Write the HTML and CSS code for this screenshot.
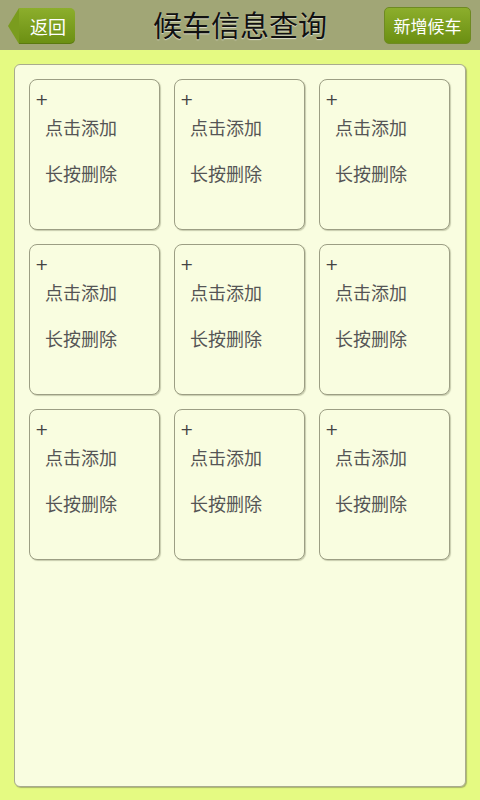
FILE: index.html
```html
<!DOCTYPE html>
<html lang="zh">
<head>
<meta charset="utf-8">
<title>候车信息查询</title>
<link rel="stylesheet" href="styles.css">
</head>
<body>
<header class="topbar">
  <a class="back-btn"><span class="back-arrow"></span><span class="back-body">返回</span></a>
  <h1 class="title">候车信息查询</h1>
  <a class="add-btn">新增候车</a>
</header>
<main class="content">
  <div class="panel">
    <div class="grid">
      <div class="card"><span class="plus">+</span><span class="line">点击添加</span><span class="line">长按删除</span></div>
      <div class="card"><span class="plus">+</span><span class="line">点击添加</span><span class="line">长按删除</span></div>
      <div class="card"><span class="plus">+</span><span class="line">点击添加</span><span class="line">长按删除</span></div>
      <div class="card"><span class="plus">+</span><span class="line">点击添加</span><span class="line">长按删除</span></div>
      <div class="card"><span class="plus">+</span><span class="line">点击添加</span><span class="line">长按删除</span></div>
      <div class="card"><span class="plus">+</span><span class="line">点击添加</span><span class="line">长按删除</span></div>
      <div class="card"><span class="plus">+</span><span class="line">点击添加</span><span class="line">长按删除</span></div>
      <div class="card"><span class="plus">+</span><span class="line">点击添加</span><span class="line">长按删除</span></div>
      <div class="card"><span class="plus">+</span><span class="line">点击添加</span><span class="line">长按删除</span></div>
    </div>
  </div>
</main>
</body>
</html>
```
FILE: styles.css
```css
* { box-sizing: border-box; }
html, body { margin: 0; padding: 0; }
body {
  width: 480px;
  height: 800px;
  background: #e5fa82;
  font-family: "Noto Sans CJK SC", "Noto Sans", sans-serif;
  overflow: hidden;
}
.topbar {
  height: 50px;
  background: #a1a676;
  display: flex;
  align-items: center;
  justify-content: space-between;
  padding: 0 9px 0 8px;
  position: relative;
}
.title {
  margin: 0;
  font-size: 29px;
  font-weight: normal;
  color: #111;
  text-shadow: 0 1px 1px rgba(255,255,255,0.6);
  position: absolute;
  left: 0;
  right: 0;
  text-align: center;
  line-height: 50px;
  top: -1px;
  pointer-events: none;
}
.back-btn {
  display: flex;
  align-items: center;
  height: 36px;
  margin-top: 2px;
  position: relative;
  z-index: 1;
}
.back-arrow {
  width: 0;
  height: 0;
  border-top: 18px solid transparent;
  border-bottom: 18px solid transparent;
  border-right: 11px solid #7a9c1e;
}
.back-body {
  height: 36px;
  width: 56px;
  background: linear-gradient(#8cae2c, #6b8f12);
  border-radius: 0 5px 5px 0;
  color: #fff;
  font-size: 18px;
  line-height: 36px;
  text-align: center;
  box-shadow: inset 0 -1px 0 rgba(0,0,0,0.15);
  padding-left: 2px;
}
.add-btn {
  height: 37px;
  width: 87px;
  background: linear-gradient(#8cae2c, #6b8f12);
  border: 1px solid #6e8a22;
  border-radius: 5px;
  color: #fff;
  font-size: 17px;
  line-height: 35px;
  text-align: center;
  margin-top: 1px;
  position: relative;
  z-index: 1;
}
.content {
  padding: 14px 14px 14px 14px;
}
.panel {
  height: 723px;
  background: #f9fde0;
  border: 1px solid #a9ab8e;
  border-radius: 6px;
  box-shadow: 1px 1px 1px rgba(110,115,80,0.5);
  padding: 14px 14px 14px 14px;
}
.grid {
  display: grid;
  grid-template-columns: repeat(3, 131px);
  grid-auto-rows: 151px;
  column-gap: 14px;
  row-gap: 14px;
}
.card {
  border: 1.5px solid #9c9e84;
  border-radius: 8px;
  background: #f9fde0;
  box-shadow: 1px 1px 1px rgba(110,115,80,0.35);
  display: flex;
  flex-direction: column;
  padding: 10px 0 0 5px;
  color: #555;
}
.plus {
  font-size: 16px;
  line-height: 20px;
  color: #444;
  font-family: "DejaVu Sans", sans-serif;
}
.line {
  font-size: 18px;
  line-height: 24px;
  padding-left: 10px;
  margin-top: 5px;
}
.line + .line {
  margin-top: 22px;
}
```
